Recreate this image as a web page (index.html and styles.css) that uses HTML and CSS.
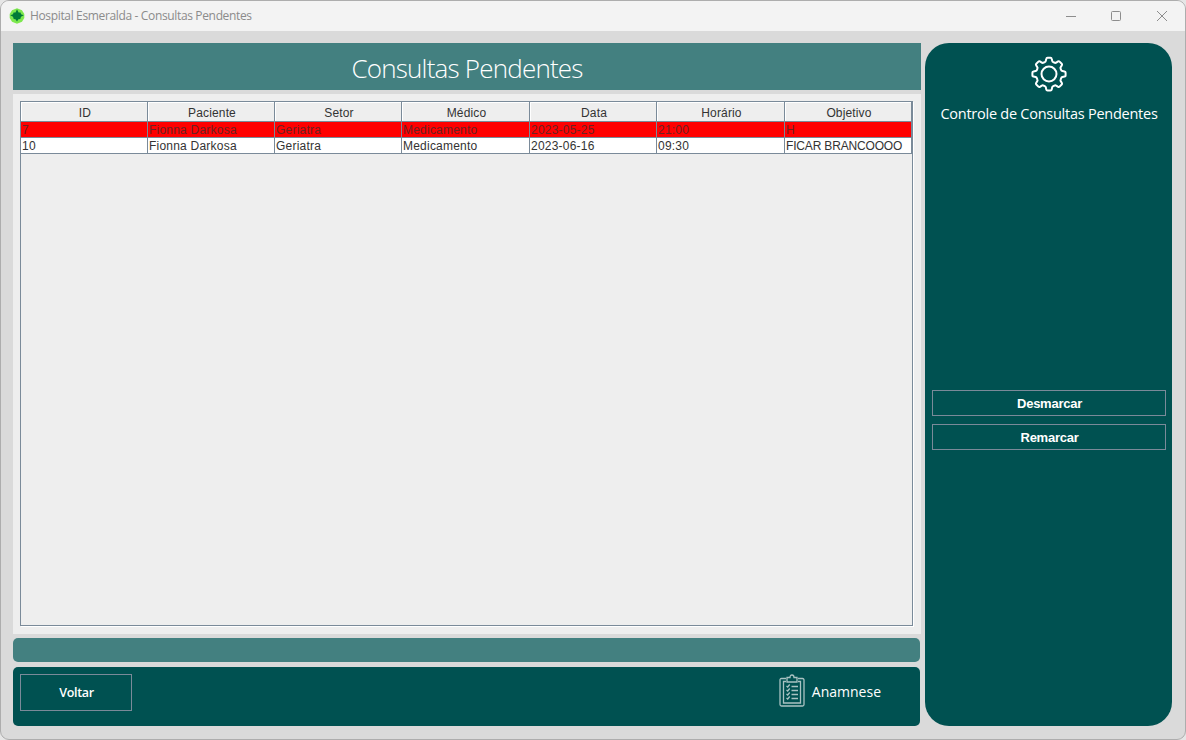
FILE: index.html
```html
<!DOCTYPE html>
<html lang="pt-BR">
<head>
<meta charset="utf-8">
<title>Hospital Esmeralda - Consultas Pendentes</title>
<link rel="stylesheet" href="styles.css">
</head>
<body>
<div class="window">
  <header class="titlebar">
    <svg class="app-icon" width="16" height="16" viewBox="0 0 16 16"><path d="M8 .3 13 2.3 15.3 6v4L13 13.8 8 15.7 3 13.8.7 10V6L3 2.3z" fill="#7de84e"/><path d="M8 1.2 9.6 4.5h2L12 6.3 14.8 7.3 12 8.8 11.3 11 9.4 11.3 8 13.4 6.5 11.3 4.7 11 4 8.8 1.3 7.3 4 6.3 4.5 4.5h2z" fill="#007b38"/></svg>
    <span class="app-title">Hospital Esmeralda - Consultas Pendentes</span>
    <svg class="controls" width="104" height="12" viewBox="0 0 104 12" fill="none" stroke="#8d8d8d"><path d="M0 6.500h10"/><rect x="45.500" y="1.500" width="9" height="9" rx="1"/><path d="m91 1 10 10M101 1 91 11"/></svg>
  </header>
  <div class="content">
    <main class="main">
      <h1 class="heading"><span>Consultas Pendentes</span></h1>
      <section class="panel">
        <div class="scroll">
          <div class="row head"><span>ID</span><span>Paciente</span><span>Setor</span><span>Médico</span><span>Data</span><span>Horário</span><span>Objetivo</span></div>
          <div class="row late"><span>7</span><span>Fionna Darkosa</span><span>Geriatra</span><span>Medicamento</span><span>2023-05-25</span><span>21:00</span><span>H</span></div>
          <div class="row"><span>10</span><span>Fionna Darkosa</span><span>Geriatra</span><span>Medicamento</span><span>2023-06-16</span><span>09:30</span><span class="tight">FICAR BRANCOOOO</span></div>
        </div>
      </section>
      <div class="strip"></div>
      <footer class="footer">
        <button class="back">Voltar</button>
        <div class="anamnese">
          <svg width="26" height="34" viewBox="0 0 26 34" fill="none" stroke="#a9c2c2" stroke-width="1.3"><path d="M7 4.500H2.500Q1 4.500 1 6v24.500Q1 32 2.500 32h21q1.500 0 1.500-1.500V6q0-1.500-1.500-1.500H19"/><path d="M7 7.500H4.500v21.500h17V7.500H19"/><path d="M8 8V3.500h3Q11 1 13 1t2 2.500h3V8z"/><path d="m7.500 12 1.200 1 2-2.500M7.500 16l1.200 1 2-2.500M7.500 20l1.200 1 2-2.500M7.500 24l1.200 1 2-2.500M12.500 12.500h6.500M12.500 16.500h6.500M12.500 20.500h6.500M12.500 24.500h6.500"/></svg>
          <span>Anamnese</span>
        </div>
      </footer>
    </main>
    <aside class="side">
      <svg class="gear" width="36" height="36" viewBox="0 0 36 36" fill="none" stroke="#fff" stroke-width="2" stroke-linejoin="round"><path d="M16.500 1.700h3q1 0 1.200 1l.5 2.200q.2.900 1 1.200l1.500.6q.8.400 1.500-.1l1.900-1.200q.8-.5 1.500.2l2.100 2.100q.7.700.2 1.500l-1.200 1.900q-.5.700-.1 1.500l.6 1.500q.3.800 1.200 1l2.200.5q1 .2 1 1.200v2.600q0 1-1 1.200l-2.200.5q-.9.200-1.200 1l-.6 1.500q-.4.800.1 1.500l1.200 1.900q.5.800-.2 1.500l-2.100 2.100q-.7.700-1.500.2l-1.900-1.200q-.7-.5-1.500-.1l-1.500.6q-.8.300-1 1.200l-.5 2.200q-.2 1-1.200 1h-3q-1 0-1.200-1l-.5-2.200q-.2-.9-1-1.200l-1.500-.6q-.8-.4-1.500.1l-1.900 1.200q-.8.500-1.500-.2l-2.100-2.100q-.7-.7-.2-1.500l1.200-1.900q.5-.7.1-1.500l-.6-1.500q-.3-.8-1.200-1l-2.200-.5q-1-.2-1-1.200v-2.600q0-1 1-1.200l2.200-.5q.9-.2 1.200-1l.6-1.500q.4-.8-.1-1.500l-1.200-1.900q-.5-.8.2-1.500l2.100-2.100q.7-.7 1.500-.2l1.900 1.200q.7.500 1.500.1l1.500-.6q.8-.3 1-1.200l.5-2.200q.2-1 1.200-1z"/><circle cx="18" cy="18" r="7.500"/></svg>
      <div class="side-title"><span>Controle de Consultas Pendentes</span></div>
      <div class="actions">
        <button>Desmarcar</button>
        <button>Remarcar</button>
      </div>
    </aside>
  </div>
</div>
</body>
</html>
```
FILE: styles.css
```css
* { box-sizing: border-box; }
body { margin: 0; background: #e6e6e6; font-family: "Liberation Sans", Arial, sans-serif; }
.window { width: 1186px; height: 740px; border: 1px solid #adadad; border-radius: 9px; background: #dadada; overflow: hidden; }
.titlebar { height: 30px; background: #f3f3f3; display: flex; align-items: center; padding: 0 15px 0 8px; }
.titlebar svg, .app-title { margin-top: -1px; }
.app-title { margin-left: 5px; font: 12px "Open Sans", sans-serif; letter-spacing: -0.35px; color: #8b8b8b; white-space: nowrap; }
.controls { margin-left: auto; }
.content { display: flex; gap: 4px; padding: 12px 13px 0 12px; }
.main { width: 908px; display: flex; flex-direction: column; }
.heading { margin: 0; height: 47px; background: #438080; color: #fff; font: 300 26px/51px "Open Sans", sans-serif; letter-spacing: -0.8px; text-align: center; white-space: nowrap; }
.panel { margin-top: 4px; height: 540px; padding: 7px; background: #eee; }
.scroll { width: 893px; height: 525px; border: 1px solid #7a8a99; box-shadow: 1px 1px 0 #fff; }
.row { display: grid; grid-template-columns: 127px 127px 127px 128px 127px 128px 127px; height: 16px; background: #fff; color: #333; font-size: 12px; line-height: 17px; letter-spacing: 0.22px; }
.row span { height: 16px; padding-left: 1px; border-right: 1px solid #7a8a99; border-bottom: 1px solid #7a8a99; white-space: nowrap; overflow: hidden; }
.row .tight { letter-spacing: -0.17px; }
.row.head { height: 20px; background: #eee; line-height: 22px; letter-spacing: 0.15px; }
.row.head span { height: 20px; padding-left: 2px; text-align: center; box-shadow: inset 1px 1px 0 #fff; }
.late { background: #f00; color: #6b2222; }
.strip { margin-top: 4px; height: 24px; width: 907px; border-radius: 5px; background: #438080; }
.footer { margin-top: 5px; width: 907px; height: 59px; padding: 7px 39px 0 7px; border-radius: 5px; background: #005151; display: flex; justify-content: space-between; align-items: flex-start; }
button { background: transparent; color: #fff; border: 1px solid #7a8a99; border-radius: 0; padding: 0; }
.back { width: 112px; height: 37px; padding-left: 1px; font: 600 12.5px "Open Sans", sans-serif; letter-spacing: -0.3px; }
.anamnese { display: flex; align-items: center; gap: 7px; color: #fff; font: 14px "Open Sans", sans-serif; letter-spacing: 0; }
.side { width: 247px; height: 683px; padding: 13px 6px 0 7px; border-radius: 24px; background: #005151; display: flex; flex-direction: column; align-items: center; }
.side-title { margin-top: 11px; color: #fff; font: 14.500px/22px "Open Sans", sans-serif; letter-spacing: -0.25px; white-space: nowrap; }
.actions { margin-top: 265px; width: 100%; display: flex; flex-direction: column; gap: 8px; }
.actions button { height: 26px; padding-left: 1px; font: bold 13px "Liberation Sans", sans-serif; letter-spacing: -0.25px; }
```
